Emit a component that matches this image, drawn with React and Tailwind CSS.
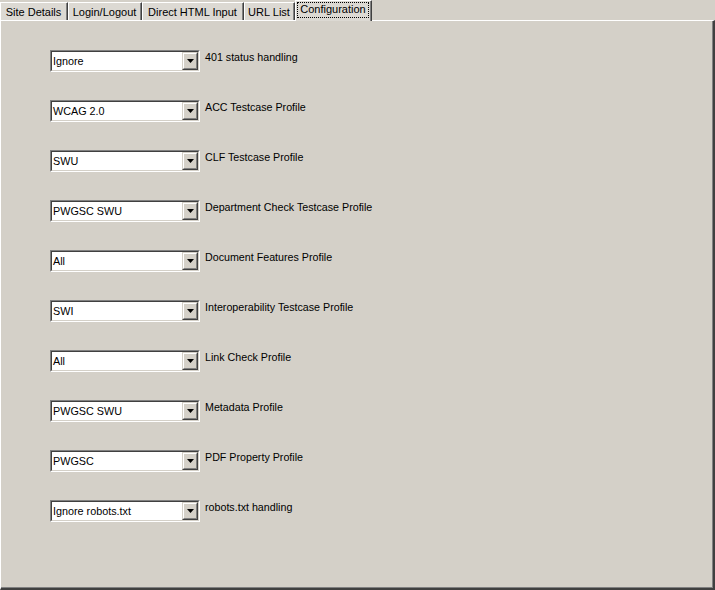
import React from 'react';

const tabs = [
  { label: 'Site Details', w: 'w-[68px]' },
  { label: 'Login/Logout', w: 'w-[74px]' },
  { label: 'Direct HTML Input', w: 'w-[102px]' },
  { label: 'URL List', w: 'w-[51px]' },
];

const rows = [
  { value: 'Ignore', label: '401 status handling' },
  { value: 'WCAG 2.0', label: 'ACC Testcase Profile' },
  { value: 'SWU', label: 'CLF Testcase Profile' },
  { value: 'PWGSC SWU', label: 'Department Check Testcase Profile' },
  { value: 'All', label: 'Document Features Profile' },
  { value: 'SWI', label: 'Interoperability Testcase Profile' },
  { value: 'All', label: 'Link Check Profile' },
  { value: 'PWGSC SWU', label: 'Metadata Profile' },
  { value: 'PWGSC', label: 'PDF Property Profile' },
  { value: 'Ignore robots.txt', label: 'robots.txt handling' },
];

function Combo({ value }) {
  // classic sunken combo box with raised arrow button
  return (
    <div className="w-[150px] h-[22px] border-t border-l border-t-[#808080] border-l-[#808080] border-b border-r border-b-white border-r-white">
      <div className="h-full flex items-center bg-white border-t border-l border-t-[#404040] border-l-[#404040] border-b border-r border-b-[#d4d0c8] border-r-[#d4d0c8]">
        <span className="flex-1 pl-[1px] pt-[1px] text-[10.8px] leading-none text-black truncate">{value}</span>
        <div className="w-[16px] h-[18px] bg-[#d4d0c8] border-t border-l border-t-[#d4d0c8] border-l-[#d4d0c8] border-b border-r border-b-[#404040] border-r-[#404040]">
          <div className="w-full h-full flex items-center justify-center border-t border-l border-t-white border-l-white border-b border-r border-b-[#808080] border-r-[#808080]">
            <svg width="7" height="4" viewBox="0 0 7 4">
              <path d="M0 0h7L3.5 4z" fill="#000" />
            </svg>
          </div>
        </div>
      </div>
    </div>
  );
}

export default function App() {
  return (
    <div
      className="w-[715px] h-[590px] bg-[#d4d0c8] flex flex-col text-black"
      style={{ fontFamily: '"Liberation Sans", Arial, sans-serif' }}
    >
      {/* Tab strip */}
      <div className="h-[20px] flex items-end relative z-10">
        {tabs.map((t) => (
          <div
            key={t.label}
            className={`${t.w} h-[18px] bg-[#dcd9d3] border-t border-l border-t-white border-l-white border-r border-r-[#404040] flex items-center justify-center text-[11px] leading-none`}
          >
            <div className="h-full w-full flex items-center justify-center pt-[1px] border-r border-r-[#808080]">
              {t.label}
            </div>
          </div>
        ))}
        <div className="w-[77px] h-[21px] -mb-[1px] bg-[#dcd9d3] border-t border-l border-t-white border-l-white border-r border-r-[#404040] flex items-start justify-center">
          <div className="h-full w-full flex items-start justify-center pt-[2px] border-r border-r-[#808080]">
            <span className="px-[2px] pb-[2px] text-[11px] leading-[12px] outline-1 outline-dotted outline-black">
              Configuration
            </span>
          </div>
        </div>
      </div>

      {/* Panel */}
      <div className="flex-1 border-t border-l border-t-white border-l-white border-r-2 border-b-2 border-r-[#404040] border-b-[#404040]">
        <div className="h-full border-r border-b border-r-[#808080] border-b-[#808080] pl-[49px] pt-[29px] flex flex-col">
          {rows.map((r, i) => (
            <div key={i} className="h-[50px] flex items-start gap-[5px]">
              <Combo value={r.value} />
              <span className="text-[10.7px] leading-[13px] pt-[1px]">{r.label}</span>
            </div>
          ))}
        </div>
      </div>
    </div>
  );
}
